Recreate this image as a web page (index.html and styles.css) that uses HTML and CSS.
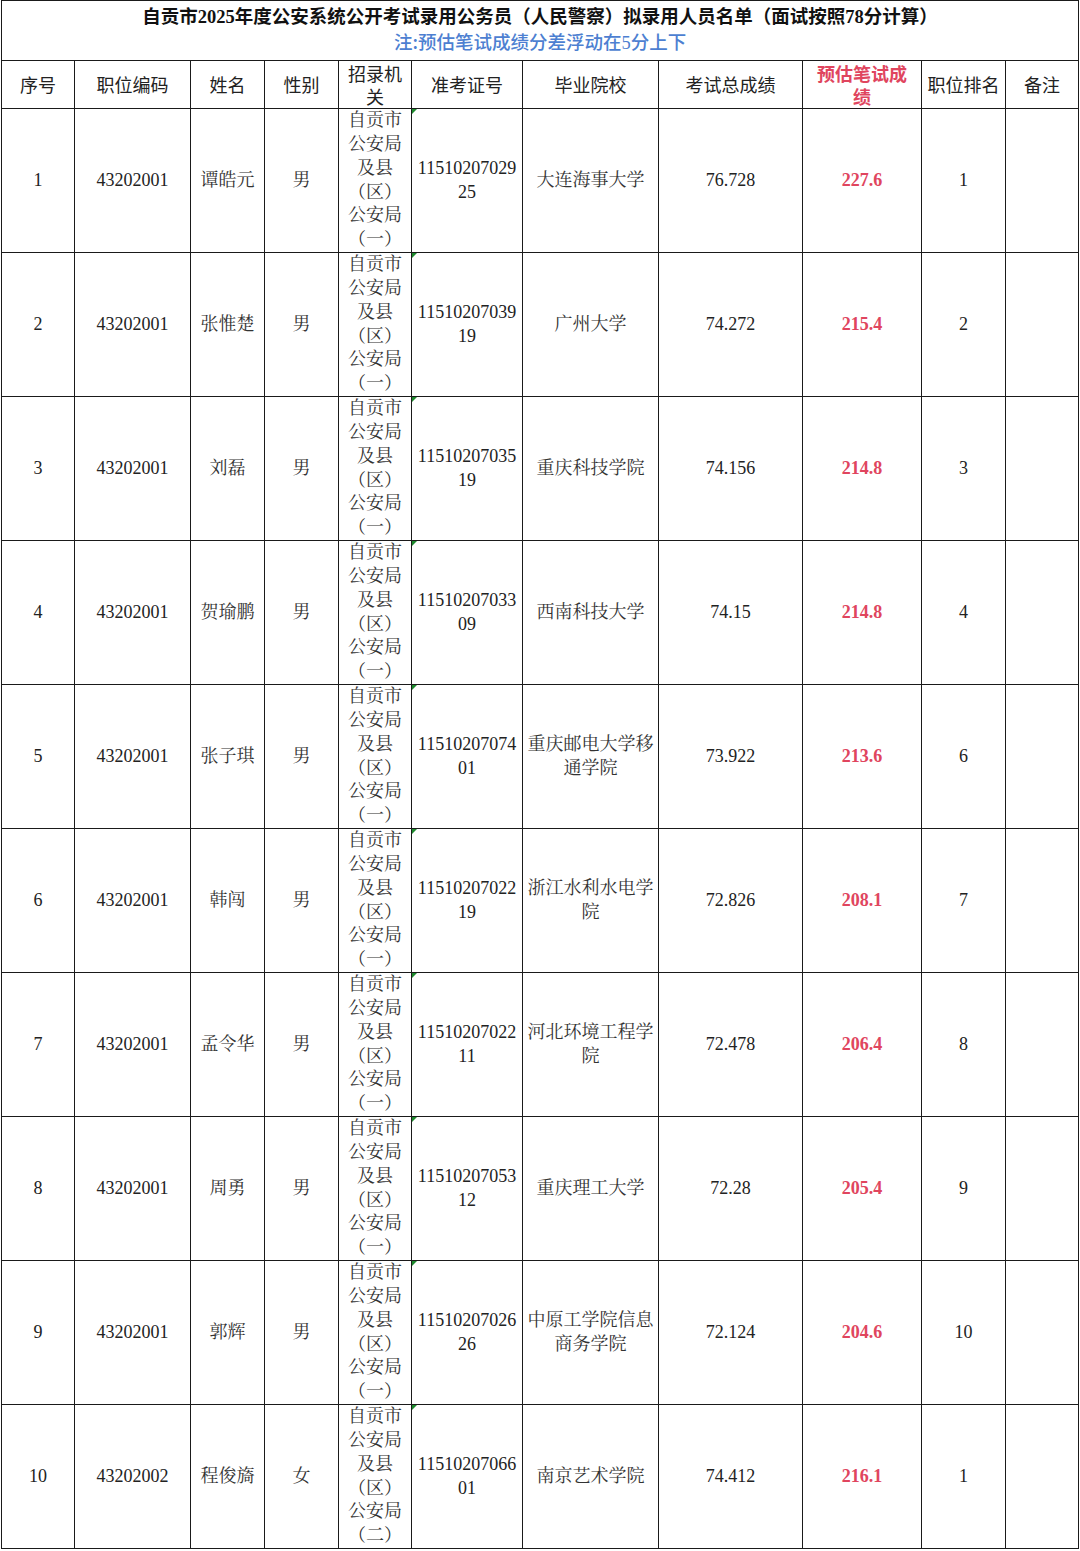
FILE: index.html
```html
<!DOCTYPE html>
<html lang="zh-CN">
<head>
<meta charset="utf-8">
<title>拟录用人员名单</title>
<link rel="stylesheet" href="styles.css">
</head>
<body>
<table class="sheet">
  <colgroup>
    <col class="c1"><col class="c2"><col class="c3"><col class="c4"><col class="c5"><col class="c6"><col class="c7"><col class="c8"><col class="c9"><col class="c10"><col class="c11">
  </colgroup>
  <thead>
    <tr class="title-row">
      <td colspan="11" class="title-cell">
        <div class="title">自贡市<span class="num">2025</span>年度公安系统公开考试录用公务员（人民警察）拟录用人员名单（面试按照<span class="num">78</span>分计算）</div>
        <div class="note">注:预估笔试成绩分差浮动在<span class="num">5</span>分上下</div>
      </td>
    </tr>
    <tr class="head-row">
      <th>序号</th><th>职位编码</th><th>姓名</th><th>性别</th><th>招录机<br>关</th><th>准考证号</th><th>毕业院校</th><th>考试总成绩</th><th class="red-head">预估笔试成<br>绩</th><th>职位排名</th><th>备注</th>
    </tr>
  </thead>
  <tbody>
    <tr><td>1</td><td>43202001</td><td class="cjk">谭皓元</td><td class="cjk">男</td><td class="cjk org">自贡市<br>公安局<br>及县<br>（区）<br>公安局<br>（一）</td><td class="zk">11510207029<br>25</td><td class="cjk">大连海事大学</td><td>76.728</td><td class="red">227.6</td><td>1</td><td></td></tr>
    <tr><td>2</td><td>43202001</td><td class="cjk">张惟楚</td><td class="cjk">男</td><td class="cjk org">自贡市<br>公安局<br>及县<br>（区）<br>公安局<br>（一）</td><td class="zk">11510207039<br>19</td><td class="cjk">广州大学</td><td>74.272</td><td class="red">215.4</td><td>2</td><td></td></tr>
    <tr><td>3</td><td>43202001</td><td class="cjk">刘磊</td><td class="cjk">男</td><td class="cjk org">自贡市<br>公安局<br>及县<br>（区）<br>公安局<br>（一）</td><td class="zk">11510207035<br>19</td><td class="cjk">重庆科技学院</td><td>74.156</td><td class="red">214.8</td><td>3</td><td></td></tr>
    <tr><td>4</td><td>43202001</td><td class="cjk">贺瑜鹏</td><td class="cjk">男</td><td class="cjk org">自贡市<br>公安局<br>及县<br>（区）<br>公安局<br>（一）</td><td class="zk">11510207033<br>09</td><td class="cjk">西南科技大学</td><td>74.15</td><td class="red">214.8</td><td>4</td><td></td></tr>
    <tr><td>5</td><td>43202001</td><td class="cjk">张子琪</td><td class="cjk">男</td><td class="cjk org">自贡市<br>公安局<br>及县<br>（区）<br>公安局<br>（一）</td><td class="zk">11510207074<br>01</td><td class="cjk">重庆邮电大学移通学院</td><td>73.922</td><td class="red">213.6</td><td>6</td><td></td></tr>
    <tr><td>6</td><td>43202001</td><td class="cjk">韩闯</td><td class="cjk">男</td><td class="cjk org">自贡市<br>公安局<br>及县<br>（区）<br>公安局<br>（一）</td><td class="zk">11510207022<br>19</td><td class="cjk">浙江水利水电学院</td><td>72.826</td><td class="red">208.1</td><td>7</td><td></td></tr>
    <tr><td>7</td><td>43202001</td><td class="cjk">孟令华</td><td class="cjk">男</td><td class="cjk org">自贡市<br>公安局<br>及县<br>（区）<br>公安局<br>（一）</td><td class="zk">11510207022<br>11</td><td class="cjk">河北环境工程学院</td><td>72.478</td><td class="red">206.4</td><td>8</td><td></td></tr>
    <tr><td>8</td><td>43202001</td><td class="cjk">周勇</td><td class="cjk">男</td><td class="cjk org">自贡市<br>公安局<br>及县<br>（区）<br>公安局<br>（一）</td><td class="zk">11510207053<br>12</td><td class="cjk">重庆理工大学</td><td>72.28</td><td class="red">205.4</td><td>9</td><td></td></tr>
    <tr><td>9</td><td>43202001</td><td class="cjk">郭辉</td><td class="cjk">男</td><td class="cjk org">自贡市<br>公安局<br>及县<br>（区）<br>公安局<br>（一）</td><td class="zk">11510207026<br>26</td><td class="cjk">中原工学院信息商务学院</td><td>72.124</td><td class="red">204.6</td><td>10</td><td></td></tr>
    <tr><td>10</td><td>43202002</td><td class="cjk">程俊旖</td><td class="cjk">女</td><td class="cjk org">自贡市<br>公安局<br>及县<br>（区）<br>公安局<br>（二）</td><td class="zk">11510207066<br>01</td><td class="cjk">南京艺术学院</td><td>74.412</td><td class="red">216.1</td><td>1</td><td></td></tr>
  </tbody>
</table>
</body>
</html>
```
FILE: styles.css
```css
html, body {
  margin: 0;
  padding: 0;
  background: #ffffff;
}

.sheet {
  border-collapse: collapse;
  table-layout: fixed;
  width: 1077px;
  margin: 0 0 0 1px;
  font-family: "Liberation Serif", "Noto Serif CJK SC", "Noto Sans CJK SC", serif;
  font-size: 18px;
  color: #222;
}

.c1 { width: 73px; }
.c2 { width: 116px; }
.c3 { width: 74px; }
.c4 { width: 74px; }
.c5 { width: 73px; }
.c6 { width: 111px; }
.c7 { width: 136px; }
.c8 { width: 144px; }
.c9 { width: 119px; }
.c10 { width: 84px; }
.c11 { width: 73px; }

.sheet td, .sheet th {
  border: 1px solid #1a1a1a;
  text-align: center;
  vertical-align: middle;
  padding: 0 3px;
  line-height: 24px;
  overflow: hidden;
}

.title-row td {
  height: 59px;
  padding: 0;
}

.title {
  font-family: "Liberation Serif", "Noto Sans CJK SC", sans-serif;
  font-weight: bold;
  font-size: 18.5px;
  line-height: 24px;
  color: #111;
}

.title .num, .note .num {
  font-family: "Liberation Serif", serif;
}

.note {
  font-family: "Noto Sans CJK SC", sans-serif;
  font-size: 18.5px;
  font-weight: 500;
  line-height: 25px;
  color: #4d7fd1;
}

.head-row th {
  height: 47px;
  font-family: "Noto Sans CJK SC", sans-serif;
  font-weight: normal;
  font-size: 18px;
  line-height: 23px;
  color: #222;
  padding: 0 2px;
}

.head-row th.red-head {
  color: #e0455e;
  font-weight: bold;
}

.sheet tbody td {
  height: 143px;
  line-height: 23.8px;
}

.cjk {
  color: #333;
}

.org {
  padding: 0 1px;
}

.zk {
  position: relative;
  padding: 0 2px;
}

.zk::before {
  content: "";
  position: absolute;
  left: 0;
  top: 0;
  border-top: 5px solid #1e8a2e;
  border-right: 5px solid transparent;
}

.red {
  color: #e0455e;
  font-weight: bold;
}
```
